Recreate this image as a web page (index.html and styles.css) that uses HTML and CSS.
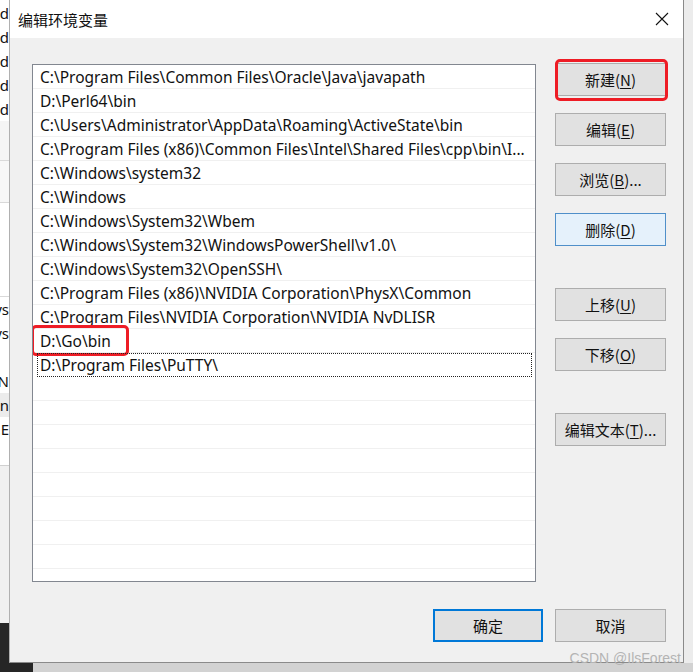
FILE: index.html
```html
<!DOCTYPE html>
<html lang="zh-CN">
<head>
<meta charset="utf-8">
<title>编辑环境变量</title>
<link rel="stylesheet" href="styles.css">
</head>
<body>
<div class="screen">
  <div class="top">
    <div class="behind">
      <div class="bl">d</div><div class="bl">d</div><div class="bl">d</div><div class="bl">d</div><div class="bl">d</div>
      <div class="bgap g1"></div>
      <div class="bgap g2"></div>
      <div class="bgap g3"></div>
      <div class="bl">ys</div><div class="bl">ys</div><div class="bl"></div>
      <div class="bl">N</div><div class="bl shade">n</div><div class="bl">.E</div>
      <div class="bl"></div>
      <div class="bgray"></div>
      <div class="bdark"></div>
    </div>
    <div class="dialog">
      <div class="titlebar">
        <span class="title">编辑环境变量</span>
        <svg class="close" width="14" height="14" viewBox="0 0 14 14"><path d="M1 1L13 13M13 1L1 13" stroke="#111" stroke-width="1.1" fill="none"/></svg>
      </div>
      <div class="body">
        <div class="main">
          <div class="list">
            <div class="row">C:\Program Files\Common Files\Oracle\Java\javapath</div>
            <div class="row">D:\Perl64\bin</div>
            <div class="row">C:\Users\Administrator\AppData\Roaming\ActiveState\bin</div>
            <div class="row">C:\Program Files (x86)\Common Files\Intel\Shared Files\cpp\bin\I...</div>
            <div class="row">C:\Windows\system32</div>
            <div class="row">C:\Windows</div>
            <div class="row">C:\Windows\System32\Wbem</div>
            <div class="row">C:\Windows\System32\WindowsPowerShell\v1.0\</div>
            <div class="row">C:\Windows\System32\OpenSSH\</div>
            <div class="row">C:\Program Files (x86)\NVIDIA Corporation\PhysX\Common</div>
            <div class="row">C:\Program Files\NVIDIA Corporation\NVIDIA NvDLISR</div>
            <div class="row marked">D:\Go\bin<span class="redbox rb-go"></span></div>
            <div class="row focus">D:\Program Files\PuTTY\</div>
            <div class="row"></div><div class="row"></div><div class="row"></div><div class="row"></div>
            <div class="row"></div><div class="row"></div><div class="row"></div><div class="row"></div>
            <div class="row last"></div>
          </div>
          <div class="side">
            <button class="btn marked">新建(<u>N</u>)<span class="redbox rb-new"></span></button>
            <button class="btn">编辑(<u>E</u>)</button>
            <button class="btn">浏览(<u>B</u>)...</button>
            <button class="btn hover">删除(<u>D</u>)</button>
            <button class="btn sep">上移(<u>U</u>)</button>
            <button class="btn">下移(<u>O</u>)</button>
            <button class="btn sep">编辑文本(<u>T</u>)...</button>
          </div>
        </div>
        <div class="footer">
          <button class="btn default">确定</button>
          <button class="btn">取消</button>
        </div>
      </div>
    </div>
    <div class="rightgap"></div>
  </div>
  <div class="bottom">
    <div class="bdark2"></div>
    <div class="bshadow"></div>
  </div>
  <div class="watermark">CSDN @IlsForest</div>
</div>
</body>
</html>
```
FILE: styles.css
```css
* { box-sizing: border-box; }
html, body { margin: 0; padding: 0; }
body {
  font-family: "Noto Sans", "Noto Sans CJK SC", sans-serif;
  background: #e6e6e6;
}
.screen {
  position: relative;
  width: 693px;
  height: 672px;
  overflow: hidden;
  display: flex;
  flex-direction: column;
}
.top {
  display: flex;
  height: 663px;
}
.behind {
  width: 9px;
  display: flex;
  flex-direction: column;
  background: #fff;
  overflow: hidden;
  font-size: 15px;
  color: #111;
}
.bl {
  height: 24px;
  line-height: 24px;
  display: flex;
  justify-content: flex-end;
  white-space: nowrap;
  flex: none;
}
.bl:first-child { margin-top: 1px; }
.bl.shade { background: #ececec; }
.bgap { flex: none; border-bottom: 1px solid #d9d9d9; }
.bgap.g1 { height: 40px; background: #f5f5f5; }
.bgap.g2 { height: 42px; background: #f7f7f7; }
.bgap.g3 { height: 94px; background: #fff; }
.bgray { height: 158px; flex: none; background: #f0f0f0; border-top: 1px solid #d0d0d0; }
.bdark { flex: 1; background: #262626; }
.dialog {
  width: 675px;
  display: flex;
  flex-direction: column;
  background: #f0f0f0;
  border-right: 1px solid #8a8a8a;
  border-bottom: 1px solid #8a8a8a;
  border-left: 1px solid #b0b0b0;
}
.titlebar {
  height: 38px;
  background: #fff;
  display: flex;
  align-items: center;
  justify-content: space-between;
  padding: 0 14px 0 8px;
}
.title {
  font-family: "Noto Sans CJK SC", sans-serif;
  font-size: 15px;
  color: #111;
}
.body {
  flex: 1;
  padding: 26px 17px 0 22px;
  display: flex;
  flex-direction: column;
}
.main {
  display: flex;
  gap: 19px;
  height: 518px;
}
.list {
  width: 504px;
  height: 518px;
  background: #fff;
  border: 1px solid #828790;
  overflow: hidden;
  display: flex;
  flex-direction: column;
}
.row {
  position: relative;
  height: 24px;
  line-height: 24px;
  padding-left: 7px;
  font-size: 15.5px;
  color: #111;
  white-space: nowrap;
  overflow: visible;
  border-bottom: 1px solid #f0f0f0;
  flex: none;
}
.row.focus {
  border: 1px dotted #222;
  margin: 0 3px 0 4px;
  padding-left: 2px;
  line-height: 22px;
}
.redbox {
  position: absolute;
  border: 3px solid #ee1c25;
  border-radius: 5px;
  pointer-events: none;
}
.rb-go { left: -2px; top: -4px; width: 98px; height: 31px; }
.rb-new { left: -1px; top: -5px; width: 113px; height: 42px; }
.side {
  width: 111px;
  display: flex;
  flex-direction: column;
  gap: 17px;
}
.btn {
  position: relative;
  width: 111px;
  height: 33px;
  background: #e1e1e1;
  border: 1px solid #adadad;
  font-family: "Noto Sans CJK SC", sans-serif;
  font-size: 15px;
  color: #111;
  padding: 0;
  flex: none;
}
.btn u { text-decoration-thickness: 1px; text-underline-offset: 2px; }
.side .btn.marked { margin-top: -1px; }
.btn.hover { background: #e5f1fb; border-color: #4f8fc9; }
.btn.sep { margin-top: 25px; }
.footer {
  display: flex;
  justify-content: flex-end;
  gap: 12px;
  margin-top: 27px;
}
.btn.default { width: 110px; border: 2px solid #0078d7; }
.rightgap { flex: 1; background: #ececec; }
.bottom { flex: 1; display: flex; }
.bdark2 { width: 33px; background: #262626; }
.bshadow { flex: 1; background: #d2d2d2; }
.watermark {
  position: absolute;
  right: 12px;
  bottom: 6px;
  font-family: "Liberation Sans", Arial, sans-serif;
  font-size: 14px;
  color: #b4b4b4;
}
```
